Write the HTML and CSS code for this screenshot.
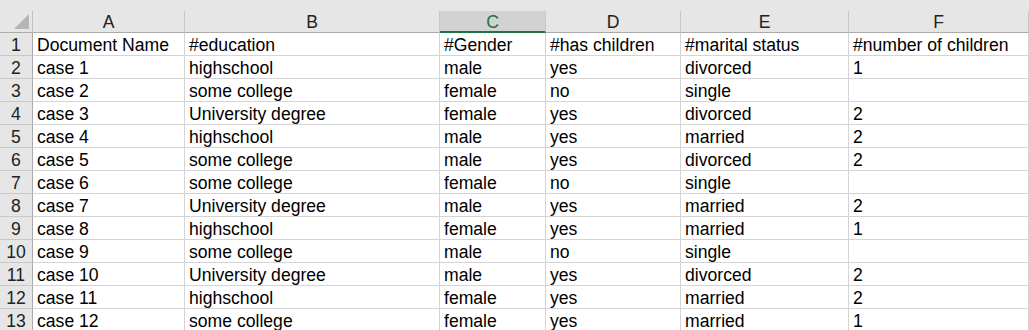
FILE: index.html
```html
<!DOCTYPE html>
<html lang="en">
    <head>
        <meta charset="UTF-8">
        <title>Sheet1</title>
        <link rel="stylesheet" href="styles.css">
    </head>
    <body>
        <div class="top-strip"></div>
        <div class="sheet">
            <div class="corner">
                <svg width="15" height="15" viewBox="0 0 15 15"><polygon points="15,0 15,15 0,15" fill="#b5b5b5"/></svg>
            </div>
            <div class="col-head">A</div>
            <div class="col-head">B</div>
            <div class="col-head selected">C</div>
            <div class="col-head">D</div>
            <div class="col-head">E</div>
            <div class="col-head">F</div>

            <div class="row-head">1</div>
            <div class="cell">Document Name</div><div class="cell">#education</div><div class="cell">#Gender</div><div class="cell">#has children</div><div class="cell">#marital status</div><div class="cell">#number of children</div>

            <div class="row-head">2</div>
            <div class="cell">case 1</div><div class="cell">highschool</div><div class="cell">male</div><div class="cell">yes</div><div class="cell">divorced</div><div class="cell">1</div>

            <div class="row-head">3</div>
            <div class="cell">case 2</div><div class="cell">some college</div><div class="cell">female</div><div class="cell">no</div><div class="cell">single</div><div class="cell"></div>

            <div class="row-head">4</div>
            <div class="cell">case 3</div><div class="cell">University degree</div><div class="cell">female</div><div class="cell">yes</div><div class="cell">divorced</div><div class="cell">2</div>

            <div class="row-head">5</div>
            <div class="cell">case 4</div><div class="cell">highschool</div><div class="cell">male</div><div class="cell">yes</div><div class="cell">married</div><div class="cell">2</div>

            <div class="row-head">6</div>
            <div class="cell">case 5</div><div class="cell">some college</div><div class="cell">male</div><div class="cell">yes</div><div class="cell">divorced</div><div class="cell">2</div>

            <div class="row-head">7</div>
            <div class="cell">case 6</div><div class="cell">some college</div><div class="cell">female</div><div class="cell">no</div><div class="cell">single</div><div class="cell"></div>

            <div class="row-head">8</div>
            <div class="cell">case 7</div><div class="cell">University degree</div><div class="cell">male</div><div class="cell">yes</div><div class="cell">married</div><div class="cell">2</div>

            <div class="row-head">9</div>
            <div class="cell">case 8</div><div class="cell">highschool</div><div class="cell">female</div><div class="cell">yes</div><div class="cell">married</div><div class="cell">1</div>

            <div class="row-head">10</div>
            <div class="cell">case 9</div><div class="cell">some college</div><div class="cell">male</div><div class="cell">no</div><div class="cell">single</div><div class="cell"></div>

            <div class="row-head">11</div>
            <div class="cell">case 10</div><div class="cell">University degree</div><div class="cell">male</div><div class="cell">yes</div><div class="cell">divorced</div><div class="cell">2</div>

            <div class="row-head">12</div>
            <div class="cell">case 11</div><div class="cell">highschool</div><div class="cell">female</div><div class="cell">yes</div><div class="cell">married</div><div class="cell">2</div>

            <div class="row-head">13</div>
            <div class="cell">case 12</div><div class="cell">some college</div><div class="cell">female</div><div class="cell">yes</div><div class="cell">married</div><div class="cell">1</div>
        </div>
    </body>
</html>
```

FILE: styles.css
```css
* {
    box-sizing: border-box;
}

body {
    margin: 0;
    padding: 0;
    width: 1029px;
    height: 330px;
    overflow: hidden;
    background-color: #fff;
    font-family: "Liberation Sans", Arial, sans-serif;
    font-size: 17.6px;
    color: #000;
}

.top-strip {
    height: 11px;
    background-color: #e6e6e6;
}

.sheet {
    display: grid;
    grid-template-columns: 33px 152px 255px 106px 135px 168px 1fr;
    grid-template-rows: 22px;
    grid-auto-rows: 23px;
    width: 1029px;
}

.corner {
    background-color: #e6e6e6;
    border-right: 1px solid #bfbfbf;
    border-bottom: 1px solid #ababab;
    display: flex;
    justify-content: flex-end;
    align-items: flex-end;
    padding: 0 3px 3px 0;
}

.corner svg {
    display: block;
}

.col-head {
    background-color: #e6e6e6;
    border-right: 1px solid #c8c8c8;
    border-bottom: 1px solid #ababab;
    text-align: center;
    line-height: 21px;
    padding-top: 1px;
    color: #222;
    overflow: hidden;
}

.col-head.selected {
    background-color: #d2d2d2;
    border-bottom: 2px solid #217346;
    color: #217346;
}

.row-head {
    background-color: #e6e6e6;
    border-right: 1px solid #ababab;
    border-bottom: 1px solid #c8c8c8;
    text-align: center;
    line-height: 22px;
    padding-top: 1px;
    color: #222;
    overflow: hidden;
}

.cell {
    border-right: 1px solid #d4d4d4;
    border-bottom: 1px solid #d4d4d4;
    padding: 1px 0 0 4px;
    line-height: 22px;
    white-space: nowrap;
    overflow: hidden;
}
```
